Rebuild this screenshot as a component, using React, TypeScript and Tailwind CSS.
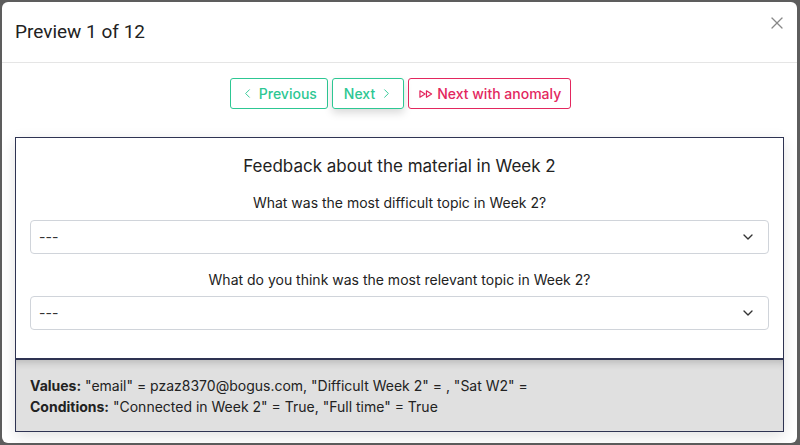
import { ChevronLeft, ChevronRight, ChevronDown, X } from 'lucide-react';

function Select() {
  return (
    <div className="flex h-[34px] w-full items-center justify-between rounded-[4px] border border-[#d0d4da] bg-white pl-[8px] pr-[12px] text-[14px] text-[#333]">
      <span>---</span>
      <ChevronDown className="h-[16px] w-[16px] text-[#333]" strokeWidth={2} />
    </div>
  );
}

export default function App() {
  return (
    <div className="h-[445px] w-[800px] overflow-hidden bg-[#5d5d5d] pl-[2px] pr-[3px] pt-[2px]" style={{ fontFamily: 'Inter, "Noto Sans", sans-serif' }}>
      <div className="flex h-[441px] flex-col rounded-[6px] bg-white">
        {/* Header */}
        <div className="flex h-[61px] items-center justify-between border-b border-[#e5e5e5] pl-[13px] pr-[10px]">
          <h2 className="text-[19px] text-[#222]" style={{ fontFamily: 'Roboto, sans-serif' }}>Preview 1 of 12</h2>
          <X className="mb-[18px] h-[20px] w-[20px] text-[#888]" strokeWidth={1.5} />
        </div>

        {/* Navigation buttons */}
        <div className="flex justify-center gap-[4px] pl-[2px] pt-[15px]">
          <button className="flex h-[31px] items-center gap-[4px] rounded-[3px] border border-[#2dc793] pl-[9px] pr-[10px] text-[14px] font-medium text-[#2dc793]">
            <ChevronLeft className="h-[15px] w-[15px]" strokeWidth={1.5} />
            Previous
          </button>
          <button className="flex h-[31px] items-center gap-[4px] rounded-[3px] border border-[#2dc793] pl-[11px] pr-[9px] text-[14px] font-medium text-[#2dc793] shadow-[0_4px_8px_rgba(0,0,0,0.15)]">
            Next
            <ChevronRight className="h-[15px] w-[15px]" strokeWidth={1.5} />
          </button>
          <button className="flex h-[31px] items-center gap-[4px] rounded-[3px] border border-[#e3275e] pl-[10px] pr-[9px] text-[14px] font-medium text-[#e3275e]">
            <svg width="14" height="10" viewBox="0 0 15 10" fill="none" stroke="currentColor" strokeWidth="1.3" strokeLinejoin="round">
              <path d="M1 1.5 L6.5 5 L1 8.5 Z" />
              <path d="M8 1.5 L13.5 5 L8 8.5 Z" />
            </svg>
            Next with anomaly
          </button>
        </div>

        {/* Card */}
        <div className="mx-[13px] mb-[11px] mt-[28px] flex flex-1 flex-col border border-[#2e3352] shadow-[0_4px_14px_rgba(0,0,0,0.12)]">
          <div className="flex flex-col items-center px-[14px] pb-[28px] pt-[16px]">
            <h3 className="text-[17px] text-[#222]">Feedback about the material in Week 2</h3>
            <p className="mt-[12px] text-[14px] text-[#222]">What was the most difficult topic in Week 2?</p>
            <div className="mt-[7px] w-full"><Select /></div>
            <p className="mt-[15px] text-[14px] text-[#222]">What do you think was the most relevant topic in Week 2?</p>
            <div className="mt-[6px] w-full"><Select /></div>
          </div>
          <div className="flex flex-1 flex-col justify-center border-t-2 border-[#2e3352] bg-[#e0e0e0] px-[14px] pt-[2px] text-[14px] leading-[21px] text-[#222] shadow-[inset_0_8px_8px_-6px_rgba(0,0,0,0.2)]">
            <p><span className="font-bold">Values:</span> "email" = pzaz8370@bogus.com, "Difficult Week 2" = , "Sat W2" =</p>
            <p><span className="font-bold">Conditions:</span> "Connected in Week 2" = True, "Full time" = True</p>
          </div>
        </div>
      </div>
    </div>
  );
}
